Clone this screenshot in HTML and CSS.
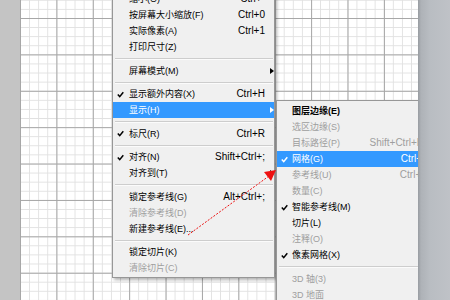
FILE: index.html
```html
<!DOCTYPE html>
<html lang="zh-CN">
<head>
    <meta charset="UTF-8">
    <title>视图菜单</title>
    <link rel="stylesheet" href="styles.css">
</head>
<body>

    <div class="strip"></div>

    <div class="canvas">

        <div class="menu main-menu">
            <div class="item"><span class="mark"></span><span class="label">缩小(O)</span><span class="key">Ctrl+-</span><span class="sub"></span></div>
            <div class="item"><span class="mark"></span><span class="label">按屏幕大小缩放(F)</span><span class="key">Ctrl+0</span><span class="sub"></span></div>
            <div class="item"><span class="mark"></span><span class="label">实际像素(A)</span><span class="key">Ctrl+1</span><span class="sub"></span></div>
            <div class="item"><span class="mark"></span><span class="label">打印尺寸(Z)</span><span class="key"></span><span class="sub"></span></div>
            <div class="sep"></div>
            <div class="item"><span class="mark"></span><span class="label">屏幕模式(M)</span><span class="key"></span><span class="sub"><i class="tri"></i></span></div>
            <div class="sep"></div>
            <div class="item"><span class="mark"><svg viewBox="0 0 7 7"><path d="M0.8 3.6 L2.7 5.6 L6.3 1.2"/></svg></span><span class="label">显示额外内容(X)</span><span class="key">Ctrl+H</span><span class="sub"></span></div>
            <div class="item active"><span class="mark"></span><span class="label">显示(H)</span><span class="key"></span><span class="sub"><i class="tri"></i></span></div>
            <div class="sep"></div>
            <div class="item"><span class="mark"><svg viewBox="0 0 7 7"><path d="M0.8 3.6 L2.7 5.6 L6.3 1.2"/></svg></span><span class="label">标尺(R)</span><span class="key">Ctrl+R</span><span class="sub"></span></div>
            <div class="sep"></div>
            <div class="item"><span class="mark"><svg viewBox="0 0 7 7"><path d="M0.8 3.6 L2.7 5.6 L6.3 1.2"/></svg></span><span class="label">对齐(N)</span><span class="key">Shift+Ctrl+;</span><span class="sub"></span></div>
            <div class="item"><span class="mark"></span><span class="label">对齐到(T)</span><span class="key"></span><span class="sub"><i class="tri"></i></span></div>
            <div class="sep"></div>
            <div class="item"><span class="mark"></span><span class="label">锁定参考线(G)</span><span class="key">Alt+Ctrl+;</span><span class="sub"></span></div>
            <div class="item disabled"><span class="mark"></span><span class="label">清除参考线(D)</span><span class="key"></span><span class="sub"></span></div>
            <div class="item"><span class="mark"></span><span class="label">新建参考线(E)...</span><span class="key"></span><span class="sub"></span></div>
            <div class="sep"></div>
            <div class="item"><span class="mark"></span><span class="label">锁定切片(K)</span><span class="key"></span><span class="sub"></span></div>
            <div class="item disabled"><span class="mark"></span><span class="label">清除切片(C)</span><span class="key"></span><span class="sub"></span></div>
        </div>

        <div class="menu sub-menu">
            <div class="item strong"><span class="mark"></span><span class="label">图层边缘(E)</span><span class="key"></span><span class="sub"></span></div>
            <div class="item disabled"><span class="mark"></span><span class="label">选区边缘(S)</span><span class="key"></span><span class="sub"></span></div>
            <div class="item disabled"><span class="mark"></span><span class="label">目标路径(P)</span><span class="key">Shift+Ctrl+H</span><span class="sub"></span></div>
            <div class="item active"><span class="mark"><svg viewBox="0 0 7 7"><path d="M0.8 3.6 L2.7 5.6 L6.3 1.2"/></svg></span><span class="label">网格(G)</span><span class="key">Ctrl+'</span><span class="sub"></span></div>
            <div class="item disabled"><span class="mark"></span><span class="label">参考线(U)</span><span class="key">Ctrl+;</span><span class="sub"></span></div>
            <div class="item disabled"><span class="mark"></span><span class="label">数量(C)</span><span class="key"></span><span class="sub"></span></div>
            <div class="item"><span class="mark"><svg viewBox="0 0 7 7"><path d="M0.8 3.6 L2.7 5.6 L6.3 1.2"/></svg></span><span class="label">智能参考线(M)</span><span class="key"></span><span class="sub"></span></div>
            <div class="item"><span class="mark"></span><span class="label">切片(L)</span><span class="key"></span><span class="sub"></span></div>
            <div class="item disabled"><span class="mark"></span><span class="label">注释(O)</span><span class="key"></span><span class="sub"></span></div>
            <div class="item"><span class="mark"><svg viewBox="0 0 7 7"><path d="M0.8 3.6 L2.7 5.6 L6.3 1.2"/></svg></span><span class="label">像素网格(X)</span><span class="key"></span><span class="sub"></span></div>
            <div class="sep"></div>
            <div class="item disabled"><span class="mark"></span><span class="label">3D 轴(3)</span><span class="key"></span><span class="sub"></span></div>
            <div class="item disabled"><span class="mark"></span><span class="label">3D 地面</span><span class="key"></span><span class="sub"></span></div>
            <div class="item disabled"><span class="mark"></span><span class="label">3D 光源</span><span class="key"></span><span class="sub"></span></div>
        </div>

    </div>

    <div class="panel"></div>

    <!-- red pointer drawn over the menus -->
    <svg class="pointer" viewBox="0 0 450 300">
        <line x1="188" y1="235" x2="269" y2="176" />
        <polygon points="276,170 271,181 264,172" />
    </svg>

</body>
</html>
```

FILE: styles.css
```css
* {
    box-sizing: border-box;
}

body {
    margin: 0;
    height: 300px;
    display: flex;
    overflow: hidden;
    position: relative;
    font-family: "Liberation Sans", "Noto Sans CJK SC", sans-serif;
    color: #000;
}

.strip {
    width: 20px;
    background: #c4c4c4;
}

.canvas {
    flex: 1;
    position: relative;
    overflow: hidden;
    background-color: #fff;
    background-image:
        linear-gradient(to right, #a6a6a6 1px, transparent 1px),
        linear-gradient(to bottom, #a6a6a6 1px, transparent 1px),
        linear-gradient(to right, #e1e1e1 1px, transparent 1px),
        linear-gradient(to bottom, #e1e1e1 1px, transparent 1px);
    background-size: 36.4px 36.4px, 36.4px 36.4px, 9.1px 9.1px, 9.1px 9.1px;
    background-position: 0 18px;
}

.panel {
    width: 32px;
    background: linear-gradient(to right, #989ca1 0, #aeb2b7 3px, #b9bdc2 12px, #bfc2c7 100%);
}

.menu {
    position: absolute;
    background: #f0f0f0;
    border: 1px solid #979797;
    padding: 1px 0;
    box-shadow: 2px 2px 3px rgba(0, 0, 0, 0.3);
}

.main-menu {
    top: -11px;
    left: 92px;
    width: 163px;
}

.sub-menu {
    top: 100px;
    left: 256px;
    width: 158px;
    padding-top: 2px;
}

.item {
    display: flex;
    align-items: center;
    height: 16px;
    line-height: 16px;
    white-space: nowrap;
}

.item .mark {
    width: 16px;
    height: 16px;
    padding-left: 4px;
    display: flex;
    align-items: center;
}

.sub-menu .item .mark {
    width: 15px;
}

.item .mark svg {
    width: 7px;
    height: 7px;
    fill: none;
    stroke: currentColor;
    stroke-width: 1.5;
}

.item .label {
    flex: 1;
    font-size: 9px;
}

.item .key {
    font-size: 10px;
}

.item .sub {
    width: 9px;
    height: 16px;
    display: flex;
    align-items: center;
    padding-left: 5px;
}

.tri {
    display: block;
    width: 0;
    height: 0;
    border-left: 4px solid currentColor;
    border-top: 3.5px solid transparent;
    border-bottom: 3.5px solid transparent;
}

.item.active {
    background: #3399ff;
    color: #fff;
}

.item.disabled {
    color: #9e9e9e;
}

.item.strong .label {
    font-weight: bold;
}

.sep {
    height: 7.5px;
    padding: 3px 1px 0 2px;
}

.sep::before {
    content: "";
    display: block;
    border-top: 1px solid #cdcdcd;
    border-bottom: 1px solid #fbfbfb;
}

.pointer {
    position: absolute;
    top: 0;
    left: 0;
    width: 450px;
    height: 300px;
    pointer-events: none;
}

.pointer line {
    stroke: #ee1111;
    stroke-width: 1;
    stroke-dasharray: 2 1.5;
}

.pointer polygon {
    fill: #ee1111;
}
```
